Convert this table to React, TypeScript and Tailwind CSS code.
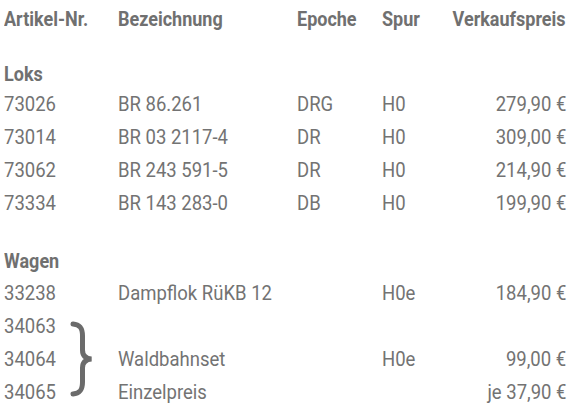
import React from "react"

type Item = {
  nr: string
  name?: string
  epoche?: string
  spur?: string
  price?: string
}

const loks: Item[] = [
  { nr: "73026", name: "BR 86.261", epoche: "DRG", spur: "H0", price: "279,90 €" },
  { nr: "73014", name: "BR 03 2117-4", epoche: "DR", spur: "H0", price: "309,00 €" },
  { nr: "73062", name: "BR 243 591-5", epoche: "DR", spur: "H0", price: "214,90 €" },
  { nr: "73334", name: "BR 143 283-0", epoche: "DB", spur: "H0", price: "199,90 €" },
]

const wagen: Item[] = [
  { nr: "33238", name: "Dampflok RüKB 12", spur: "H0e", price: "184,90 €" },
  { nr: "34063" },
  { nr: "34064", name: "Waldbahnset", spur: "H0e", price: "99,00 €" },
  { nr: "34065", name: "Einzelpreis", price: "je 37,90 €" },
]

const grid = "grid grid-cols-[114px_179px_85px_70px_minmax(0,1fr)] items-center"

// condensed look: Roboto squeezed horizontally
function Cell({
  children,
  right,
  bold,
}: {
  children?: React.ReactNode
  right?: boolean
  bold?: boolean
}) {
  return (
    <div className={right ? "flex min-w-0 justify-end" : "flex min-w-0"}>
      <span
        className={
          "inline-block shrink-0 whitespace-nowrap " +
          (bold ? "scale-x-90 " : "scale-x-[0.925] ") +
          (right ? "origin-right" : "origin-left")
        }
      >
        {children}
      </span>
    </div>
  )
}

function Row({ item }: { item: Item }) {
  return (
    <div className={grid + " h-[32.75px]"}>
      <Cell>{item.nr}</Cell>
      <Cell>{item.name}</Cell>
      <Cell>{item.epoche}</Cell>
      <Cell>{item.spur}</Cell>
      <Cell right>{item.price}</Cell>
    </div>
  )
}

function Brace() {
  return (
    <svg
      className="absolute left-[65px] top-[44px]"
      width="26"
      height="76"
      viewBox="0 0 26 76"
      fill="none"
    >
      <path
        d="M4 3 C11 3.5 13.5 7 13.5 15 L13.5 29 C13.5 34.5 16 37.5 22.5 38 C16 38.5 13.5 41.5 13.5 47 L13.5 61 C13.5 69 11 72.5 4 73"
        stroke="#6b6b6b"
        strokeWidth="5"
        strokeLinecap="round"
      />
    </svg>
  )
}

export default function App() {
  return (
    <div className="w-[574px] h-[410px] overflow-hidden bg-white pl-[4px] pr-[8px] pt-[2px] font-['Roboto',sans-serif] text-[20px] leading-[24px] text-[#737373]">
      <div className={grid + " h-[33px] font-bold text-[#707070]"}>
        <Cell bold>Artikel-Nr.</Cell>
        <Cell bold>Bezeichnung</Cell>
        <Cell bold>Epoche</Cell>
        <Cell bold>Spur</Cell>
        <Cell bold right>
          Verkaufspreis
        </Cell>
      </div>

      <div className="mt-[25px] flex h-[28px] items-center font-bold text-[#707070]">
        <Cell bold>Loks</Cell>
      </div>
      {loks.map((item) => (
        <Row key={item.nr} item={item} />
      ))}

      <div className="mt-[25px] flex h-[33px] items-center font-bold text-[#707070]">
        <Cell bold>Wagen</Cell>
      </div>
      <div className="relative">
        {wagen.map((item) => (
          <Row key={item.nr} item={item} />
        ))}
        <Brace />
      </div>
    </div>
  )
}
